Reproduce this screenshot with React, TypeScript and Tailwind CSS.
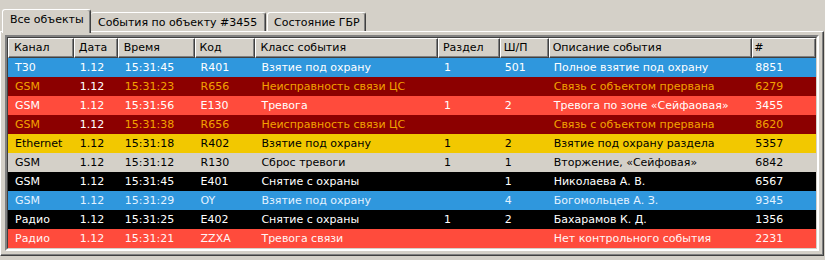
import React from "react";

type Col = { label: string; w: number; pad: number };
const cols: Col[] = [
  { label: "Канал", w: 66, pad: 7 },
  { label: "Дата", w: 44, pad: 6 },
  { label: "Время", w: 77, pad: 7 },
  { label: "Код", w: 61, pad: 6 },
  { label: "Класс события", w: 183, pad: 6 },
  { label: "Раздел", w: 62, pad: 6 },
  { label: "Ш/П", w: 49, pad: 5 },
  { label: "Описание события", w: 204, pad: 5 },
  { label: "#", w: 64, pad: 3 },
];

type Row = { bg: string; fg: string; cells: string[]; over?: Record<number, string> };

const O = "#f2a200";
const rows: Row[] = [
  { bg: "#2f97dd", fg: "#ffffff", cells: ["T30", "1.12", "15:31:45", "R401", "Взятие под охрану", "1", "501", "Полное взятие под охрану", "8851"] },
  { bg: "#8c0000", fg: O, over: { 1: "#ffffff" }, cells: ["GSM", "1.12", "15:31:23", "R656", "Неисправность связи ЦС", "", "", "Связь с объектом прервана", "6279"] },
  { bg: "#ff4b3c", fg: "#ffffff", cells: ["GSM", "1.12", "15:31:56", "E130", "Тревога", "1", "2", "Тревога по зоне «Сейфаовая»", "3455"] },
  { bg: "#8c0000", fg: O, over: { 1: "#ffffff" }, cells: ["GSM", "1.12", "15:31:38", "R656", "Неисправность связи ЦС", "", "", "Связь с объектом прервана", "8620"] },
  { bg: "#f2c800", fg: "#000000", cells: ["Ethernet", "1.12", "15:31:18", "R402", "Взятие под охрану", "1", "2", "Взятие под охрану раздела", "5357"] },
  { bg: "#d4d0c8", fg: "#000000", cells: ["GSM", "1.12", "15:31:12", "R130", "Сброс тревоги", "1", "1", "Вторжение, «Сейфовая»", "6842"] },
  { bg: "#000000", fg: "#ffffff", cells: ["GSM", "1.12", "15:31:45", "E401", "Снятие с охраны", "", "1", "Николаева А. В.", "6567"] },
  { bg: "#2f97dd", fg: "#e4f2ff", cells: ["GSM", "1.12", "15:31:29", "OY", "Взятие под охрану", "", "4", "Богомольцев А. З.", "9345"] },
  { bg: "#000000", fg: "#ffffff", cells: ["Радио", "1.12", "15:31:25", "E402", "Снятие с охраны", "1", "2", "Бахарамов К. Д.", "1356"] },
  { bg: "#ff4b3c", fg: "#fff4f4", cells: ["Радио", "1.12", "15:31:21", "ZZXA", "Тревога связи", "", "", "Нет контрольного события", "2231"] },
];

export default function App() {
  return (
    <div
      className="w-[825px] h-[260px] bg-[#d4d0c8] pt-[9px] text-[11px] text-black overflow-hidden"
      style={{ fontFamily: '"DejaVu Sans", Verdana, sans-serif' }}
    >
      {/* tabs */}
      <div className="flex items-end h-[22px] pl-[2px] relative z-10">
        <div className="h-[24px] -mb-[2px] w-[89px] bg-[#d4d0c8] border-l border-t border-white border-r-[#404040] border-r rounded-t-[3px] shadow-[inset_-1px_0_#808080] pl-[7px] pt-[3px] leading-[14px]">
          Все объекты
        </div>
        <div className="h-[19px] w-[175px] bg-[#d4d0c8] border-t border-white border-r border-r-[#404040] rounded-t-[3px] shadow-[inset_-1px_0_#808080] pl-[7px] pt-[3px] leading-[14px]">
          События по объекту #3455
        </div>
        <div className="h-[19px] w-[99px] ml-[1px] bg-[#d4d0c8] border-l border-t border-white border-r border-r-[#404040] rounded-t-[3px] shadow-[inset_-1px_0_#808080] pl-[6px] pt-[3px] leading-[14px]">
          Состояние ГБР
        </div>
      </div>
      {/* panel */}
      <div className="w-[824px] h-[225px] border-l border-t border-white border-r border-b border-r-[#404040] border-b-[#404040] shadow-[inset_-1px_-1px_#808080] pl-[4px] pt-[3px]">
        <div className="w-[814px] border-2 border-t-[#808080] border-l-[#808080] border-r-white border-b-white">
          <div className="border border-t-[#404040] border-l-[#404040] border-r-[#d4d0c8] border-b-[#d4d0c8]">
            {/* header */}
            <div className="flex h-[20px]">
              {cols.map((c) => (
                <div
                  key={c.label}
                  className="h-[20px] bg-[#d4d0c8] border-l border-t border-white border-r border-b border-r-[#404040] border-b-[#404040] shadow-[inset_-1px_-1px_#808080] leading-[17px] whitespace-nowrap overflow-hidden"
                  style={{ width: c.w, paddingLeft: c.pad - 2 }}
                >
                  {c.label}
                </div>
              ))}
            </div>
            {/* rows */}
            {rows.map((r, i) => (
              <div key={i} className="flex h-[19px]" style={{ background: r.bg }}>
                {cols.map((c, j) => (
                  <div
                    key={j}
                    className="h-[19px] leading-[19px] whitespace-nowrap overflow-hidden"
                    style={{ width: c.w, paddingLeft: c.pad, color: r.over?.[j] ?? r.fg }}
                  >
                    {r.cells[j]}
                  </div>
                ))}
              </div>
            ))}
          </div>
        </div>
      </div>
    </div>
  );
}
